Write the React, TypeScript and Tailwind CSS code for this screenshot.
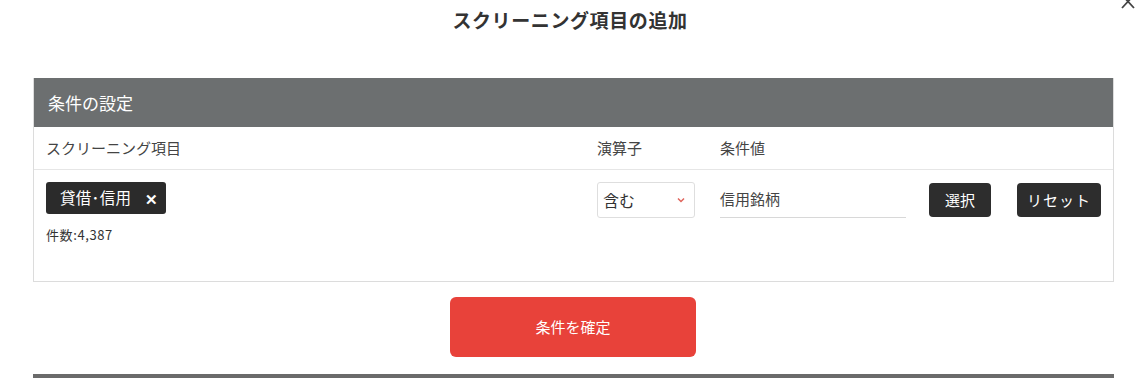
import React from "react";

export default function App() {
  const font = { fontFamily: '"Noto Sans CJK JP", "Noto Sans", sans-serif' };
  return (
    <div className="relative w-[1140px] h-[378px] overflow-hidden bg-white text-[#333]" style={font}>
      <svg className="absolute right-[4px] top-[-5px]" width="16" height="15" viewBox="0 0 16 15">
        <path d="M2 0 L14 13 M14 0 L2 13" stroke="#444" strokeWidth="1.8" fill="none" />
      </svg>
      <div className="h-[78px] pt-[5px] text-center">
        <h1 className="text-[19px] font-bold leading-[30px] text-[#333] tracking-[0.6px]">スクリーニング項目の追加</h1>
      </div>
      <div className="ml-[33px] w-[1081px] border-x border-b border-[#dcdcdc]">
        <div className="h-[49px] bg-[#6c6f70] px-[14px] flex items-center text-white text-[17px]">条件の設定</div>
        <div className="h-[43px] flex items-center border-b border-[#e6e6e6] text-[15px] text-[#444]">
          <div className="w-[563px] pl-[12px]">スクリーニング項目</div>
          <div className="w-[123px]">演算子</div>
          <div>条件値</div>
        </div>
        <div className="h-[111px] flex items-start pt-[12px]">
          <div className="w-[563px] pl-[12px]">
            <div className="inline-flex items-center h-[32px] bg-[#2b2b2b] rounded-[3px] text-white pl-[14px] pr-[8px] text-[15.5px]">
              <span className="tracking-[0.3px]">貸借･信用</span>
              <span className="ml-[14px] text-[15px] font-bold leading-none">✕</span>
            </div>
            <div className="mt-[11px] text-[13px] tracking-[0.6px] text-[#333]">件数:4,387</div>
          </div>
          <div className="w-[123px]">
            <div className="w-[98px] h-[36px] border border-[#dedede] rounded-[3px] flex items-center justify-between pl-[5px] pr-[9px] text-[16px] text-[#333]">
              <span>含む</span>
              <svg width="8" height="6" viewBox="0 0 8 6">
                <path d="M1 1.5 L4 4.5 L7 1.5" stroke="#e0645c" strokeWidth="1.5" fill="none" />
              </svg>
            </div>
          </div>
          <div className="w-[186px] h-[36px] border-b border-[#d8d8d8] flex items-center text-[15px] text-[#444]">信用銘柄</div>
          <button className="ml-[23px] mt-[1px] w-[62px] h-[34px] bg-[#2d2d2d] rounded-[4px] text-white text-[15px]">選択</button>
          <button className="ml-[26px] mt-[1px] w-[84px] h-[34px] bg-[#2d2d2d] rounded-[4px] text-white text-[15px] tracking-[1px]">リセット</button>
        </div>
      </div>
      <div className="flex justify-center mt-[15px] pl-[6px]">
        <button className="w-[246px] h-[60px] bg-[#e8423a] rounded-[6px] text-white text-[15px]">条件を確定</button>
      </div>
      <div className="absolute left-[33px] top-[374px] w-[1081px] h-[6px] bg-[#6b6b6b]" />
    </div>
  );
}
